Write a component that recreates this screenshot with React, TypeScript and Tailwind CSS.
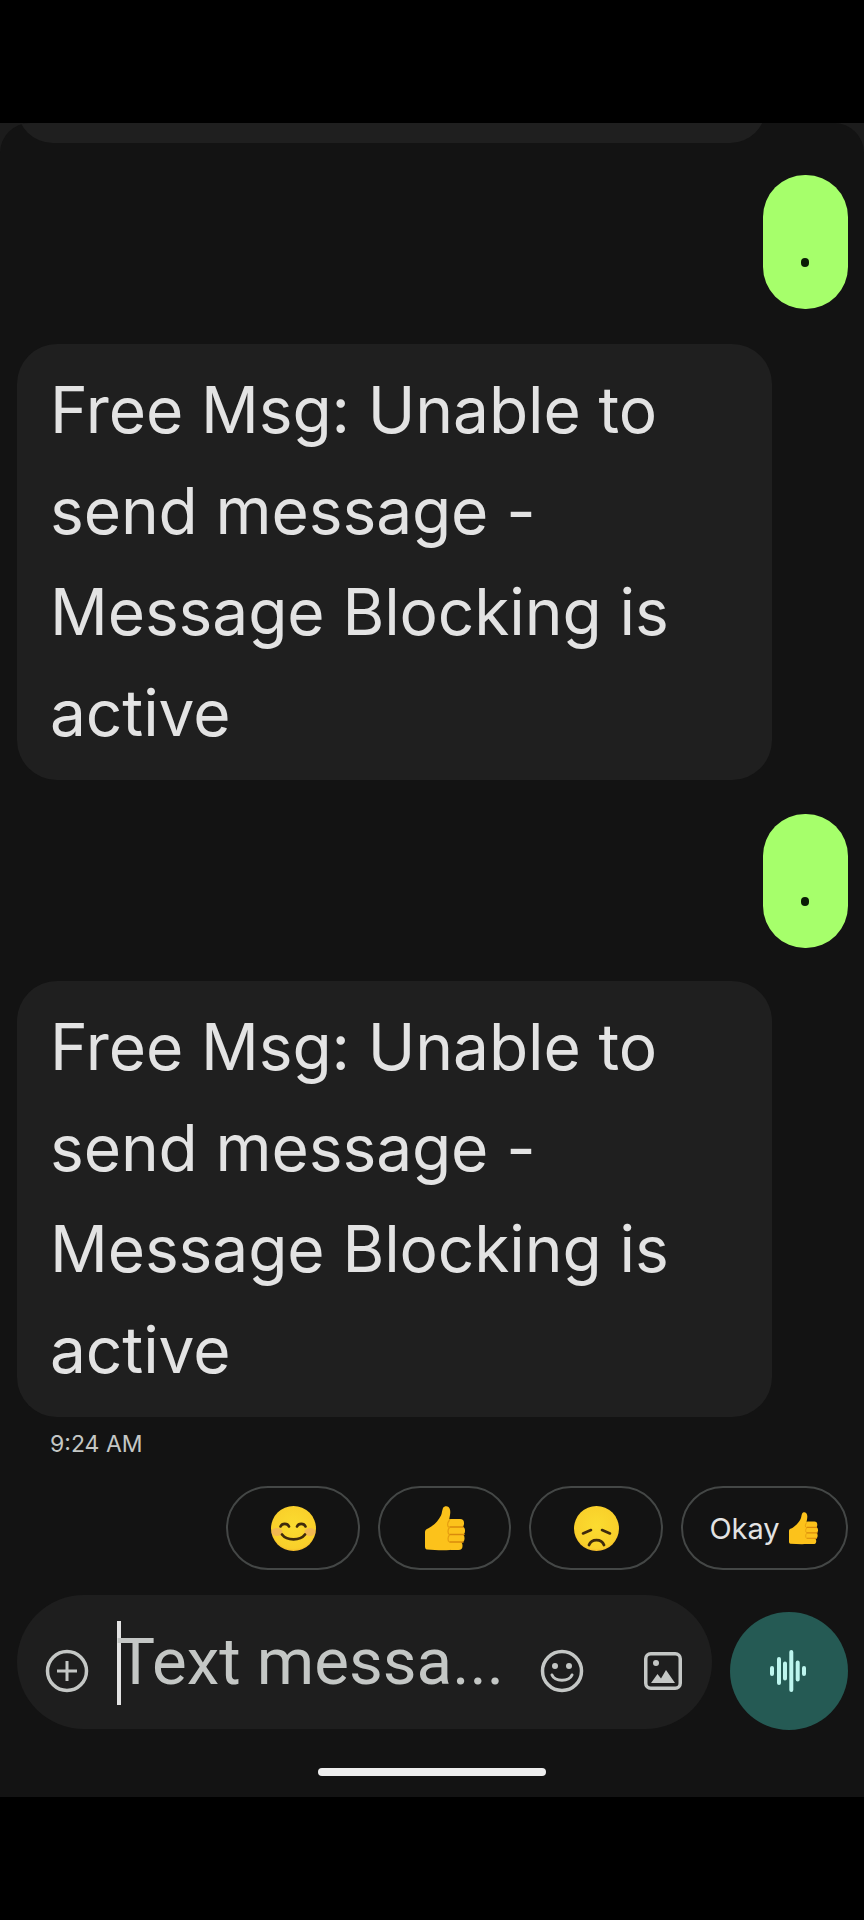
const font = { fontFamily: '"Inter", "Liberation Sans", sans-serif' };
const rob = { fontFamily: '"Roboto", "Liberation Sans", sans-serif' };

function GreenBubble() {
  return (
    <div className="flex justify-end">
      <div className="relative w-[85px] h-[134px] rounded-[42px] bg-[#a6ff6b]">
        <div className="absolute left-[38px] top-[83px] w-[8px] h-[9px] rounded-full bg-[#0a1c05]" />
      </div>
    </div>
  );
}

function GrayBubble() {
  const lines = ['Free Msg: Unable to', 'send message -', 'Message Blocking is', 'active'];
  return (
    <div className="w-[755px] h-[436px] rounded-[40px] bg-[#1f1f1f] pl-[33px] pt-[15px] text-[64px] leading-[101px] tracking-[-0.1px] text-[#e3e3e3]">
      {lines.map((l) => (
        <div key={l} className="whitespace-nowrap">{l}</div>
      ))}
    </div>
  );
}

function Smile() {
  return (
    <svg width="45" height="45" viewBox="0 0 45 45">
      <defs>
        <radialGradient id="fs" cx="50%" cy="45%" r="58%">
          <stop offset="0%" stopColor="#fbdc30" />
          <stop offset="85%" stopColor="#f9cf2a" />
          <stop offset="100%" stopColor="#f2b02a" />
        </radialGradient>
      </defs>
      <circle cx="22.500" cy="22.500" r="22.500" fill="url(#fs)" />
      <ellipse cx="6" cy="26" rx="5.500" ry="4" fill="#eda66a" opacity=".6" />
      <ellipse cx="39" cy="26" rx="5.500" ry="4" fill="#eda66a" opacity=".6" />
      <path d="M9.500 20.500c1.500-3.500 7-3.500 8.500 0M26 20.500c1.500-3.500 7-3.500 8.500 0" fill="none" stroke="#3f2a0c" strokeWidth="2.600" strokeLinecap="round" />
      <path d="M11 28.500c5 6.500 18 6.500 23 0" fill="none" stroke="#3f2a0c" strokeWidth="2.800" strokeLinecap="round" />
    </svg>
  );
}

function Sad() {
  return (
    <svg width="45" height="45" viewBox="0 0 45 45">
      <defs>
        <radialGradient id="fd" cx="50%" cy="45%" r="58%">
          <stop offset="0%" stopColor="#fbdc30" />
          <stop offset="85%" stopColor="#f9cf2a" />
          <stop offset="100%" stopColor="#f2b02a" />
        </radialGradient>
      </defs>
      <circle cx="22.500" cy="22.500" r="22.500" fill="url(#fd)" />
      <path d="M9 27.500l8-3.500M36 27.500l-8-3.500" fill="none" stroke="#3f2a0c" strokeWidth="2.600" strokeLinecap="round" />
      <path d="M15 39c2.500-6.500 12.500-6.500 15 0" fill="none" stroke="#3f2a0c" strokeWidth="2.800" strokeLinecap="round" />
    </svg>
  );
}

function Thumb({ w, h }: { w: number; h: number }) {
  return (
    <svg width={w} height={h} viewBox="0 0 40 45">
      <path d="M0 26c0-2 1.500-3 3-3.500 5-2.500 10-7 13-13 1-2.500 1-5 2-7.500 1-2 4-2.500 5.500-1 2 2 2 5 1.500 8-.5 2.500-1 5-1 7.500L25 44c-8 .5-16 0-23-.5-1.500-.2-2-1.500-2-3z" fill="#fcc21b" />
      <rect x="22" y="13" width="17" height="8.500" rx="4" fill="#fcc21b" />
      <rect x="22" y="20.500" width="18" height="8.500" rx="4" fill="#fcc21b" />
      <rect x="22" y="28" width="17.500" height="8.500" rx="4" fill="#fcc21b" />
      <rect x="22" y="35.500" width="15.500" height="8.500" rx="4" fill="#fcc21b" />
      <path d="M25 21h13M25 28.500h14M25 36h13" stroke="#d98a0c" strokeWidth="1.500" strokeLinecap="round" fill="none" />
      <path d="M24.500 14c-2.500 3-2.500 7 0 7.500M24.500 21.500c-2 2-2 6 0 7M24.500 29c-2 2-2 6 0 7" stroke="#e59d10" strokeWidth="1.200" fill="none" />
    </svg>
  );
}

function Chip({ className, children }: { className: string; children: React.ReactNode }) {
  return (
    <div className={`h-[84px] rounded-[42px] border-2 border-[#444746] flex items-center justify-center ${className}`}>
      {children}
    </div>
  );
}

export default function App() {
  return (
    <div className="w-[864px] h-[1920px] bg-black flex flex-col overflow-hidden" style={font}>
      <div className="h-[123px] shrink-0" />
      <div className="h-[1674px] shrink-0 bg-[#1c1c1c]">
        <div className="h-full rounded-t-[30px] bg-[#131313] flex flex-col pl-[17px] pr-[16px] overflow-hidden">
          <div className="w-[749px] h-[100px] -mt-[80px] shrink-0 rounded-[36px] bg-[#1f1f1f]" />
          <div className="mt-[32px]"><GreenBubble /></div>
          <div className="mt-[35px]"><GrayBubble /></div>
          <div className="mt-[34px]"><GreenBubble /></div>
          <div className="mt-[33px]"><GrayBubble /></div>
          <div className="mt-[11px] pl-[33px] text-[23px] leading-[32px] text-[#c4c7c5]">9:24 AM</div>
          <div className="mt-[26px] flex justify-end gap-[18px]">
            <Chip className="w-[134px]"><Smile /></Chip>
            <Chip className="w-[133px]"><Thumb w={40} h={45} /></Chip>
            <Chip className="w-[134px]"><Sad /></Chip>
            <Chip className="w-[167px] gap-[9px] pr-[2px]">
              <span className="text-[29px] leading-none text-[#e3e3e3]">Okay</span>
              <Thumb w={29} h={33} />
            </Chip>
          </div>
          <div className="mt-[25px] flex items-end justify-between">
            <div className="relative w-[695px] h-[134px] rounded-[67px] bg-[#1e1e1e] flex items-center">
              <svg className="ml-[28px] mt-[18px] shrink-0" width="44" height="44" viewBox="0 0 44 44" fill="none" stroke="#c4c7c5" strokeWidth="3.500">
                <circle cx="22" cy="22" r="19.500" />
                <path d="M22 12v20M12 22h20" strokeWidth="3" />
              </svg>
              <div className="ml-[28px] mt-[2px] w-[4px] h-[84px] bg-[#e3e3e3] shrink-0" />
              <span className="-ml-[5px] text-[65.500px] leading-none text-[#c4c7c5] whitespace-nowrap" style={rob}>Text messa...</span>
              <svg className="absolute left-[523px] top-[54px]" width="44" height="44" viewBox="0 0 44 44" fill="none">
                <circle cx="22" cy="22" r="19.500" stroke="#c4c7c5" strokeWidth="3.500" />
                <circle cx="15" cy="17" r="3" fill="#c4c7c5" />
                <circle cx="29" cy="17" r="3" fill="#c4c7c5" />
                <path d="M12 26c3 7 17 7 20 0" stroke="#c4c7c5" strokeWidth="3" strokeLinecap="round" />
              </svg>
              <svg className="absolute left-[627px] top-[57px]" width="38" height="38" viewBox="0 0 38 38" fill="none">
                <rect x="1.750" y="1.750" width="34.500" height="34.500" rx="5" stroke="#c4c7c5" strokeWidth="3.500" />
                <circle cx="12" cy="11" r="3" fill="#c4c7c5" />
                <path d="M7 31l6.500-9 3.500 4.500 5-8.500 9 13z" fill="#c4c7c5" />
              </svg>
            </div>
            <div className="w-[118px] h-[118px] rounded-full bg-[#255a54] flex items-center justify-center -mb-[1px]">
              <svg width="38" height="42" viewBox="0 0 38 42" stroke="#bdf5ee" strokeWidth="4" strokeLinecap="round">
                <path d="M2 18v6M9 9v24M15 13.500v15M21.300 2v38M27.700 12.500v17M34 18v6" />
              </svg>
            </div>
          </div>
          <div className="mt-[39px] ml-[301px] w-[228px] h-[8px] rounded-full bg-[#eeeeee]" />
        </div>
      </div>
    </div>
  );
}
